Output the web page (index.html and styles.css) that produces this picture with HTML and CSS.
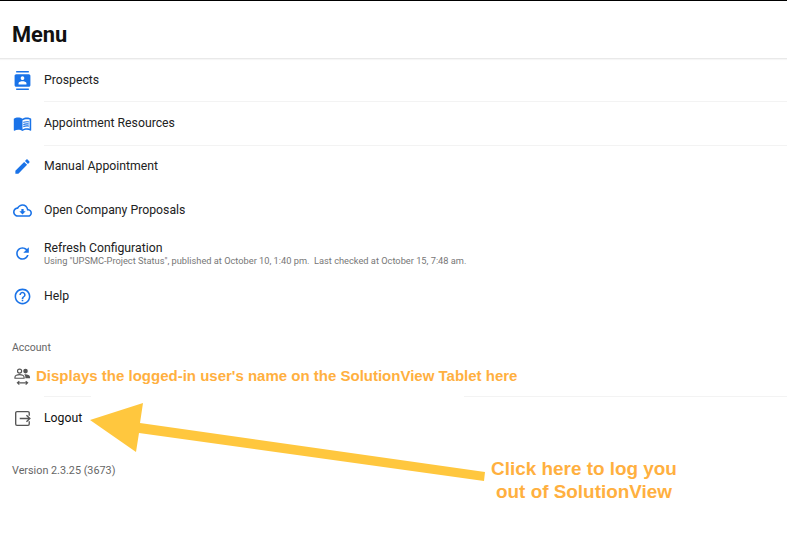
FILE: index.html
```html
<!DOCTYPE html>
<html lang="en">
<head>
<meta charset="utf-8">
<title>Menu</title>
<link rel="stylesheet" href="styles.css">
</head>
<body>
<main class="page">
  <header class="header"><h1 class="title">Menu</h1></header>
  <ul class="list">
    <li class="row row-ruled">
      <svg class="icon icon-blue" viewBox="0 0 24 24"><path d="M20 0H4v2h16V0zM4 24h16v-2H4v2zM20 4H4c-1.1 0-2 .9-2 2v12c0 1.1.9 2 2 2h16c1.1 0 2-.9 2-2V6c0-1.1-.9-2-2-2zm-8 2.75c1.24 0 2.25 1.01 2.25 2.25s-1.01 2.25-2.25 2.25S9.75 10.24 9.75 9 10.76 6.75 12 6.75zM17 17H7v-1.5c0-1.67 3.33-2.5 5-2.5s5 .83 5 2.5V17z"/></svg>
      <div class="row-body"><span class="label">Prospects</span></div>
    </li>
    <li class="row row-ruled">
      <svg class="icon icon-blue" viewBox="0 0 24 24"><path d="M21 5c-1.11-.35-2.33-.5-3.5-.5-1.95 0-4.05.4-5.5 1.5-1.45-1.1-3.55-1.5-5.5-1.5S2.45 4.9 1 6v14.65c0 .25.25.5.5.5.1 0 .15-.05.25-.05C3.1 20.45 5.05 20 6.5 20c1.95 0 4.05.4 5.5 1.5 1.35-.85 3.8-1.5 5.5-1.5 1.65 0 3.35.3 4.75 1.05.1.05.15.05.25.05.25 0 .5-.25.5-.5V6c-.6-.45-1.25-.75-2-1zm0 13.5c-1.1-.35-2.3-.5-3.5-.5-1.7 0-4.15.65-5.5 1.5V8c1.35-.85 3.8-1.5 5.5-1.5 1.2 0 2.4.15 3.5.5v11.5z"/><path d="M17.5 10.5c.88 0 1.73.09 2.5.26V9.24c-.79-.15-1.64-.24-2.5-.24-1.7 0-3.24.29-4.5.83v1.66c1.13-.64 2.7-.99 4.5-.99zM13 12.49v1.66c1.13-.64 2.7-.99 4.5-.99.88 0 1.73.09 2.5.26V11.9c-.79-.15-1.64-.24-2.5-.24-1.7 0-3.24.3-4.5.83zM17.5 14.33c-1.7 0-3.24.29-4.5.83v1.66c1.13-.64 2.7-.99 4.5-.99.88 0 1.73.09 2.5.26v-1.52c-.79-.16-1.64-.24-2.5-.24z"/></svg>
      <div class="row-body"><span class="label">Appointment Resources</span></div>
    </li>
    <li class="row">
      <svg class="icon icon-blue" viewBox="0 0 24 24"><path d="M3 17.25V21h3.75L17.81 9.94l-3.75-3.75L3 17.25zM20.71 7.04c.39-.39.39-1.02 0-1.41l-2.34-2.34c-.39-.39-1.02-.39-1.41 0l-1.83 1.83 3.75 3.75 1.83-1.83z"/></svg>
      <div class="row-body"><span class="label">Manual Appointment</span></div>
    </li>
    <li class="row">
      <svg class="icon icon-blue" viewBox="0 0 24 24"><path d="M19.35 10.04C18.67 6.59 15.64 4 12 4 9.11 4 6.6 5.64 5.35 8.04 2.34 8.36 0 10.91 0 14c0 3.31 2.69 6 6 6h13c2.76 0 5-2.24 5-5 0-2.64-2.05-4.78-4.65-4.96zM19 18H6c-2.21 0-4-1.79-4-4 0-2.05 1.53-3.76 3.56-3.97l1.07-.11.5-.95C8.08 7.14 9.94 6 12 6c2.62 0 4.88 1.86 5.39 4.43l.3 1.5 1.53.11c1.56.1 2.78 1.41 2.78 2.96 0 1.65-1.35 3-3 3zm-5.55-8h-2.9v3H8l4 4 4-4h-2.55z"/></svg>
      <div class="row-body"><span class="label">Open Company Proposals</span></div>
    </li>
    <li class="row">
      <svg class="icon icon-blue" viewBox="0 0 24 24"><path d="M17.65 6.35C16.2 4.9 14.21 4 12 4c-4.42 0-7.99 3.58-7.99 8s3.57 8 7.99 8c3.73 0 6.84-2.55 7.73-6h-2.08c-.82 2.33-3.04 4-5.65 4-3.31 0-6-2.69-6-6s2.69-6 6-6c1.66 0 3.14.69 4.22 1.78L13 11h7V4l-2.35 2.35z"/></svg>
      <div class="row-body">
        <span class="label">Refresh Configuration</span>
        <span class="sublabel">Using "UPSMC-Project Status", published at October 10, 1:40 pm.&nbsp; Last checked at October 15, 7:48 am.</span>
      </div>
    </li>
    <li class="row">
      <svg class="icon icon-blue" viewBox="0 0 24 24"><path d="M11 18h2v-2h-2v2zm1-16C6.48 2 2 6.48 2 12s4.48 10 10 10 10-4.48 10-10S17.52 2 12 2zm0 18c-4.41 0-8-3.59-8-8s3.59-8 8-8 8 3.59 8 8-3.59 8-8 8zm0-14c-2.21 0-4 1.79-4 4h2c0-1.1.9-2 2-2s2 .9 2 2c0 2-3 1.75-3 5h2c0-2.25 3-2.5 3-5 0-2.21-1.79-4-4-4z"/></svg>
      <div class="row-body"><span class="label">Help</span></div>
    </li>
  </ul>
  <h2 class="section-title">Account</h2>
  <ul class="list">
    <li class="row row-ruled row-account">
      <svg class="icon icon-gray" viewBox="0 0 24 24"><circle cx="8.3" cy="5.2" r="2.6" fill="none" stroke-width="1.5"/><circle cx="15.8" cy="5.2" r="2.9" class="solid"/><path d="M2.5 14.2v-1.4c0-1.8 3-3.2 5.8-3.2s5.7 1.4 5.7 3.2v1.4z" fill="none" stroke-width="1.5"/><path d="M14 9.2c3.4-.4 7.5.9 7.5 3.3v1.7H15.6v-1.6c0-1.4-.6-2.4-1.6-3.4z" class="solid"/><path d="M5.5 20h13M8 17.8 5.5 20 8 22.2M16 17.8l2.5 2.2-2.5 2.2" fill="none" stroke-width="1.4"/></svg>
    </li>
    <li class="row row-logout">
      <svg class="icon icon-gray" viewBox="0 0 24 24"><path d="M20.5 8.500V5a1.600 1.600 0 0 0-1.600-1.600H5A1.600 1.600 0 0 0 3.400 5v14A1.600 1.600 0 0 0 5 20.600h13.900a1.600 1.600 0 0 0 1.600-1.600v-3.500" fill="none" stroke-width="1.700"/><path d="M8.500 12h13M17 7.800l4.300 4.200-4.300 4.200" fill="none" stroke-width="1.700"/></svg>
      <div class="row-body"><span class="label label-strong">Logout</span></div>
    </li>
  </ul>
  <p class="version">Version 2.3.25 (3673)</p>

  <div class="mask"></div>
  <svg class="arrow" viewBox="0 0 787 547"><polygon points="90,420 143,403 140,423 485,472 484,481 139,433 136,452"/></svg>
  <p class="note note-user">Displays the logged-in user's name on the SolutionView Tablet here</p>
  <p class="note note-logout">Click here to log you<br>out of SolutionView</p>
</main>
</body>
</html>
```
FILE: styles.css
```css
* { box-sizing: border-box; }
html, body { margin: 0; padding: 0; background: #fff; }
body { font-family: Roboto, "Liberation Sans", sans-serif; color: #1c1c1e; }
.page { position: relative; width: 787px; height: 547px; overflow: hidden; border-top: 1px solid #000; }
.header { height: 58px; padding-left: 12px; display: flex; align-items: center; border-bottom: 1px solid #e9e9e9; box-shadow: 0 1px 1px #f6f6f6; }
.title { margin: 0; font-size: 21.8px; font-weight: 700; color: #111; line-height: 1; position: relative; top: 5px; }
.list { list-style: none; margin: 0; padding: 0; }
.row { height: 43.35px; display: flex; align-items: center; gap: 12px; padding: 0 0 1px 13px; position: relative; }
.row-ruled::after { content: ""; position: absolute; left: 44px; right: 0; bottom: 0; height: 1px; background: #f3f3f3; }
.row-account { height: 42px; padding-bottom: 0; }
.row-logout { padding-bottom: 0; }
.row-body { display: flex; flex-direction: column; }
.icon { width: 19px; height: 19px; flex: none; }
.icon-blue { fill: #1a73e8; }
.icon-gray { fill: none; stroke: #555; }
.icon-gray .solid { fill: #555; stroke: none; }
.label { font-size: 12.25px; line-height: 15px; color: #222; }
.label-strong { color: #111; }
.sublabel { font-size: 9.25px; line-height: 10px; color: #777; }
.section-title { margin: 0; padding: 22px 0 0 12px; height: 36px; font-size: 10.5px; line-height: 13px; font-weight: 400; color: #666; }
.version { margin: 0; padding: 23.5px 0 0 12px; font-size: 10.8px; line-height: 14px; color: #666; }
.mask { position: absolute; left: 91px; top: 385px; width: 373px; height: 16px; background: #fff; }
.arrow { position: absolute; left: 0; top: -1px; width: 787px; height: 547px; fill: #ffc73e; }
.note { position: absolute; margin: 0; font-family: "Liberation Sans", Arial, sans-serif; font-weight: 700; color: #ffb03f; }
.note-user { left: 36px; top: 366px; font-size: 15px; line-height: 18px; white-space: nowrap; }
.note-logout { left: 484px; top: 456px; width: 200px; font-size: 18.9px; line-height: 23px; text-align: center; }
```
